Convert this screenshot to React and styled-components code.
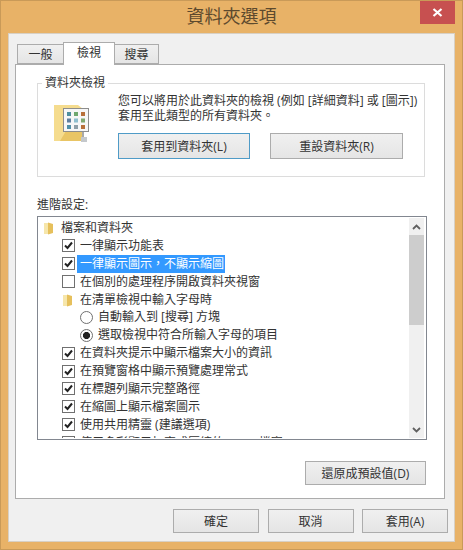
import styled, { createGlobalStyle } from "styled-components";

const Global = createGlobalStyle`
    html, body {
        margin: 0;
        padding: 0;
        background: #fff;
    }
    * {
        box-sizing: border-box;
    }
`

const FONT = `"Open Sans", "Noto Sans CJK TC", sans-serif`

const rows = [
    { kind: "folder", level: 0, text: "檔案和資料夾" },
    { kind: "check", level: 1, checked: true, text: "一律顯示功能表" },
    { kind: "check", level: 1, checked: true, selected: true, text: "一律顯示圖示，不顯示縮圖" },
    { kind: "check", level: 1, text: "在個別的處理程序開啟資料夾視窗" },
    { kind: "folder", level: 1, text: "在清單檢視中輸入字母時" },
    { kind: "radio", level: 2, text: "自動輸入到 [搜尋] 方塊" },
    { kind: "radio", level: 2, checked: true, text: "選取檢視中符合所輸入字母的項目" },
    { kind: "check", level: 1, checked: true, text: "在資料夾提示中顯示檔案大小的資訊" },
    { kind: "check", level: 1, checked: true, text: "在預覽窗格中顯示預覽處理常式" },
    { kind: "check", level: 1, checked: true, text: "在標題列顯示完整路徑" },
    { kind: "check", level: 1, checked: true, text: "在縮圖上顯示檔案圖示" },
    { kind: "check", level: 1, checked: true, text: "使用共用精靈 (建議選項)" },
    { kind: "check", level: 1, text: "使用多彩顯示加密或壓縮的 NTFS 檔案" },
]

function SmallFolder() {
    return (
        <svg width="12" height="14" viewBox="0 0 12 14">
            <path d="M1 2h4v11H1z" fill="#f6e6ab" />
            <path d="M5 1.5l5 1.5v9l-5 1.5z" fill="#e6c05c" />
        </svg>
    )
}

function ViewFolder() {
    const cells = ["#4f8f9f", "#6fa86f", "#b8703a", "#5f7f9f", "#8fbfcf", "#7fa86f", "#4f8fa8", "#8f9fa8", "#b8703a"]
    return (
        <svg width="36" height="42" viewBox="0 0 36 42">
            <path d="M0 2h24l5 4v32H0z" fill="#f5dc8e" />
            <path d="M24 8h5v30H6z" fill="#e9c565" />
            <rect x="9.5" y="5.5" width="25" height="23" fill="#f7f7f7" stroke="#8d8d8d" />
            {cells.map((c, i) => (
                <rect key={i} x={13 + (i % 3) * 7} y={9 + Math.floor(i / 3) * 6.5} width="4" height="4" fill={c} />
            ))}
            <rect x="28" y="29" width="2" height="5" fill="#a8a8a8" />
            <rect x="27" y="34" width="6" height="5" fill="#c4c8cc" />
        </svg>
    )
}

function Chevron({ down }) {
    return (
        <svg width="9" height="6" viewBox="0 0 9 6">
            <path d={down ? "M1 1l3.5 3.5L8 1" : "M1 5l3.5-3.5L8 5"} fill="none" stroke="#606060" strokeWidth="1.8" />
        </svg>
    )
}

export default function App() {
    return (
        <Window>
            <Global />
            <TitleBar>
                <Title>資料夾選項</Title>
                <CloseButton>
                    <svg width="11" height="9" viewBox="0 0 11 9">
                        <path d="M1.5 1l8 7M9.5 1l-8 7" stroke="#fff" strokeWidth="2.2" />
                    </svg>
                </CloseButton>
            </TitleBar>
            <Client>
                <Tabs>
                    <Tab $width={47}>一般</Tab>
                    <Tab $width={52} $active>檢視</Tab>
                    <Tab $width={45}>搜尋</Tab>
                </Tabs>
                <Panel>
                    <Group>
                        <legend>資料夾檢視</legend>
                        <GroupBody>
                            <IconSlot><ViewFolder /></IconSlot>
                            <GroupMain>
                                <Description>
                                    您可以將用於此資料夾的檢視 (例如 [詳細資料] 或 [圖示])<br />
                                    套用至此類型的所有資料夾。
                                </Description>
                                <GroupButtons>
                                    <Button $width={132} $height={26} $focused>套用到資料夾(L)</Button>
                                    <Button $width={133} $height={26}>重設資料夾(R)</Button>
                                </GroupButtons>
                            </GroupMain>
                        </GroupBody>
                    </Group>
                    <AdvancedLabel>進階設定:</AdvancedLabel>
                    <ListBox>
                        <Rows>
                            {rows.map((row) => (
                                <Row key={row.text} $level={row.level}>
                                    {row.kind === "folder" && <RowIcon><SmallFolder /></RowIcon>}
                                    {row.kind === "check" && (
                                        <Check>
                                            {row.checked && (
                                                <svg width="9" height="9" viewBox="0 0 9 9">
                                                    <path d="M1 4.5l2.5 2.5L8 1.5" fill="none" stroke="#222" strokeWidth="2" />
                                                </svg>
                                            )}
                                        </Check>
                                    )}
                                    {row.kind === "radio" && <Radio $checked={row.checked} />}
                                    <RowText $selected={row.selected}>{row.text}</RowText>
                                </Row>
                            ))}
                        </Rows>
                        <ScrollBar>
                            <ScrollButton><Chevron /></ScrollButton>
                            <ScrollTrack><ScrollThumb /></ScrollTrack>
                            <ScrollButton><Chevron down /></ScrollButton>
                        </ScrollBar>
                    </ListBox>
                    <RestoreRow>
                        <Button $width={121} $height={24}>還原成預設值(D)</Button>
                    </RestoreRow>
                </Panel>
                <Footer>
                    <Button $width={86} $height={24}>確定</Button>
                    <Button $width={86} $height={24}>取消</Button>
                    <Button $width={86} $height={24}>套用(A)</Button>
                </Footer>
            </Client>
        </Window>
    )
}

const Window = styled.div`
    width: 463px;
    height: 550px;
    background: #e8b267;
    border: 1px solid #c99a58;
    padding: 0 7px 7px 7px;
    display: flex;
    flex-direction: column;
    font-family: ${FONT};
    font-size: 12px;
    color: #333;
`

const TitleBar = styled.div`
    height: 32px;
    flex-shrink: 0;
    display: flex;
    justify-content: center;
    position: relative;
`

const Title = styled.div`
    font-size: 18px;
    line-height: 30px;
    color: #5d4a2e;
`

const CloseButton = styled.div`
    position: absolute;
    top: 0;
    right: 0;
    width: 35px;
    height: 23px;
    background: #c75050;
    display: flex;
    align-items: center;
    justify-content: center;
`

const Client = styled.div`
    flex: 1;
    background: #f0f0f0;
    border: 1px solid #d8d0c4;
    padding: 10px 9px 0 6px;
    display: flex;
    flex-direction: column;
`

const Tabs = styled.div`
    height: 20px;
    flex-shrink: 0;
    display: flex;
    align-items: flex-end;
    padding-left: 2px;
    position: relative;
    z-index: 1;
`

const Tab = styled.div`
    width: ${(p) => p.$width}px;
    height: ${(p) => (p.$active ? "23px" : "20px")};
    margin-right: -1px;
    margin-bottom: ${(p) => (p.$active ? "-1px" : "0")};
    border: 1px solid #acacac;
    border-bottom: ${(p) => (p.$active ? "none" : "1px solid #acacac")};
    background: ${(p) => (p.$active ? "#fff" : "linear-gradient(#f0f0f0, #e5e5e5)")};
    position: relative;
    z-index: ${(p) => (p.$active ? 2 : 0)};
    text-align: center;
    line-height: 19px;
`

const Panel = styled.div`
    height: 435px;
    flex-shrink: 0;
    background: #fff;
    border: 1px solid #acacac;
    padding: 11px 19px 0 21px;
    display: flex;
    flex-direction: column;
`

const Group = styled.fieldset`
    margin: 0;
    padding: 0;
    height: 101px;
    flex-shrink: 0;
    min-width: 0;
    border: 1px solid #dcdcdc;
    legend {
        margin-left: 4px;
        padding: 0 3px;
        font-size: 12px;
        line-height: 14px;
    }
`

const GroupBody = styled.div`
    display: flex;
    padding-left: 16px;
`

const IconSlot = styled.div`
    width: 64px;
    padding-top: 13px;
    flex-shrink: 0;
`

const GroupMain = styled.div`
    display: flex;
    flex-direction: column;
`

const Description = styled.div`
    line-height: 15px;
    white-space: nowrap;
    margin-top: 3px;
    height: 40px;
`

const GroupButtons = styled.div`
    display: flex;
    gap: 20px;
`

const Button = styled.div`
    width: ${(p) => p.$width}px;
    height: ${(p) => p.$height}px;
    border: 1px solid ${(p) => (p.$focused ? "#4f9bc7" : "#acacac")};
    background: linear-gradient(#f0f0f0, #e5e5e5);
    display: flex;
    align-items: center;
    justify-content: center;
    color: #333;
`

const AdvancedLabel = styled.div`
    margin-top: 19px;
    height: 20px;
    line-height: 17px;
    flex-shrink: 0;
`

const ListBox = styled.div`
    width: 390px;
    height: 224px;
    flex-shrink: 0;
    border: 1px solid #828790;
    display: flex;
    padding: 1px 2px 1px 1px;
    overflow: hidden;
`

const Rows = styled.div`
    flex: 1;
    min-width: 0;
    overflow: hidden;
    padding-top: 1px;
`

const Row = styled.div`
    height: 17.9px;
    display: flex;
    align-items: center;
    padding-left: ${(p) => 4 + p.$level * 19}px;
    white-space: nowrap;
`

const RowIcon = styled.span`
    width: 13px;
    height: 14px;
    margin-right: 2px;
    display: flex;
`

const Check = styled.span`
    width: 13px;
    height: 13px;
    margin-right: 2px;
    border: 1px solid #707070;
    background: #fff;
    display: flex;
    align-items: center;
    justify-content: center;
    flex-shrink: 0;
`

const Radio = styled.span`
    width: 13px;
    height: 13px;
    margin-left: -1px;
    margin-right: 2px;
    border-radius: 50%;
    border: 1px solid #707070;
    background: ${(p) => (p.$checked ? "radial-gradient(circle, #222 3.2px, #fff 3.9px)" : "#fff")};
    flex-shrink: 0;
`

const RowText = styled.span`
    line-height: 18px;
    padding: 0 1px 0 3px;
    background: ${(p) => (p.$selected ? "#3399ff" : "transparent")};
    color: ${(p) => (p.$selected ? "#fff" : "#333")};
`

const ScrollBar = styled.div`
    width: 15px;
    display: flex;
    flex-direction: column;
    flex-shrink: 0;
    background: #f0f0f0;
`

const ScrollButton = styled.div`
    height: 17px;
    display: flex;
    align-items: center;
    justify-content: center;
    flex-shrink: 0;
`

const ScrollTrack = styled.div`
    flex: 1;
`

const ScrollThumb = styled.div`
    height: 90px;
    background: #cdcdcd;
`

const RestoreRow = styled.div`
    display: flex;
    justify-content: flex-end;
    margin-top: 21px;
    width: 389px;
`

const Footer = styled.div`
    display: flex;
    justify-content: flex-end;
    gap: 8.5px;
    margin-top: 10px;
    margin-right: -3px;
`
